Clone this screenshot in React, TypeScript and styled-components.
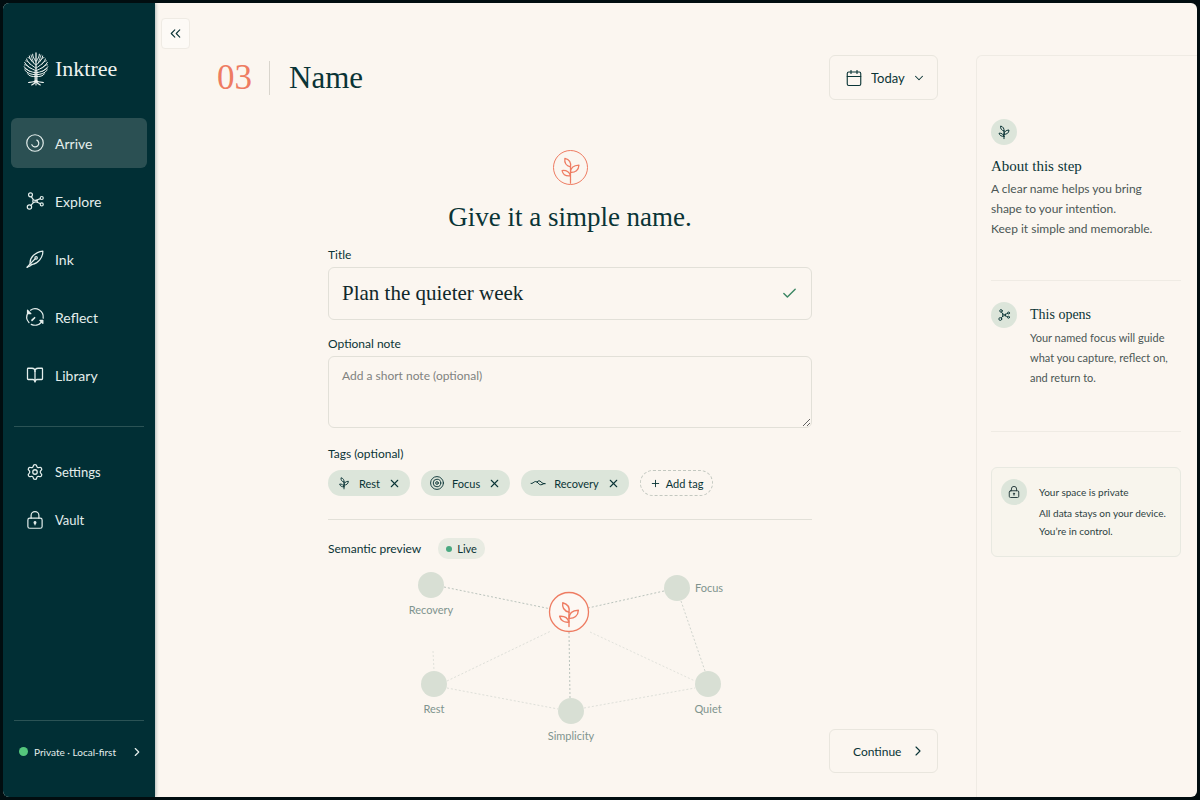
import React from "react";
import styled, { createGlobalStyle, css } from "styled-components";
import { BookOpen, Calendar, Check, ChevronDown, ChevronRight, ChevronsLeft, Plus, Settings, X } from "lucide-react";

const sans = `Lato, "Liberation Sans", sans-serif`;
const serif = `"Liberation Serif", "Times New Roman", serif`;
const color = {
  frame: "#010d10",
  pine: "#012f35",
  pineActive: "#2b5053",
  paper: "#fbf6f0",
  ink: "#0a3436",
  body: "#4b5655",
  coral: "#ee7c62",
  sage: "#dce5da",
  line: "#e2e0d8",
  faint: "#efebe4",
};

const GlobalStyle = createGlobalStyle`
  *, *::before, *::after { box-sizing: border-box; }
  body { margin: 0; background: ${color.frame}; font-family: ${sans}; color: ${color.ink}; }
  button, input, textarea, select { font: inherit; color: inherit; }
  button { cursor: pointer; }
  h1, h2, h3, p, ul { margin: 0; padding: 0; }
  svg { display: block; flex: none; }
`;

/* ---------- icons ---------- */

type IconProps = { size?: number; weight?: number };

const Line = ({ size = 18, weight = 1.6, children }: IconProps & { children: React.ReactNode }) => (
  <svg width={size} height={size} viewBox="0 0 24 24" overflow="visible" fill="none" stroke="currentColor" strokeWidth={weight} strokeLinecap="round" strokeLinejoin="round" aria-hidden="true">
    {children}
  </svg>
);

const sprigPaths = (
  <>
    <path d="M12 22V10.500" />
    <path d="M12 10.500C8.200 9.600 6.400 7 7 3c3.800 1 5.600 4 5 7.500z" />
    <path d="M12 15.500c0-4 3-6.300 7.500-6.500-.2 4.500-3.200 6.800-7.500 6.500z" />
    <path d="M12 18.500c-1-3.500-3.700-5-7.500-4.700.8 3.400 3.800 5.200 7.500 4.700z" />
  </>
);

const SprigIcon = ({ rooted, ...p }: IconProps & { rooted?: boolean }) => (
  <Line {...p}>
    {sprigPaths}
    {rooted && <path d="M12 22v3" />}
  </Line>
);

const ArriveIcon = (p: IconProps) => (
  <Line {...p}>
    <circle cx="12" cy="12" r="11" />
    <path d="M14.500 8.200A4.800 4.800 0 1 1 7.800 14.300" />
  </Line>
);

const NetworkIcon = (p: IconProps) => (
  <Line {...p}>
    <circle cx="6" cy="3.800" r="2.600" />
    <circle cx="4.600" cy="20" r="2.900" />
    <circle cx="21" cy="8" r="2" />
    <circle cx="21" cy="16.500" r="2" />
    <path d="M7 6.200l2.500 3.600M6.500 17.800l3-3.300M9.500 9.800c-.6 1.600-.6 3.100 0 4.700M9.500 9.800c2 1.800 4 1.600 5.500.7l4.300-1.700M9.500 14.500c2-1.500 4-1.700 5.500-.8l4.300 2M15 10.500v3.200" />
  </Line>
);

const QuillIcon = (p: IconProps) => (
  <Line {...p}>
    <path d="M5.500 18.500C4.500 10 12 3 22.500 1.500 22.500 10.500 16 18 8.500 19.300z" />
    <path d="M1.500 23l4-4.500 4.500-4.500 2.300-2.300" />
    <circle cx="13.500" cy="10.500" r="1.600" />
    <path d="M1.500 23l4.500-2.200 2.500-1.500" />
  </Line>
);

const ReflectIcon = (p: IconProps) => (
  <Line {...p}>
    <path d="M6 2.900A11 11 0 0 1 22.900 13.500" />
    <path d="M20.500 19A11 11 0 0 1 7 21.800" />
    <path d="M4 19.500A11 11 0 0 1 2.800 6.200" />
    <path d="M2 3v4.500h4.500zM22.500 20.500v-4h-4z" fill="currentColor" />
    <path d="M8 16.500l3.500-3.500M8 16.500l.5-1" strokeWidth="2.200" />
  </Line>
);

const LockIcon = (p: IconProps) => (
  <Line {...p}>
    <rect x="2.500" y="9.500" width="19" height="13.500" rx="2.500" />
    <path d="M6.800 9.500V6a5.200 5.200 0 0 1 10.400 0v3.500" />
    <circle cx="12" cy="15.200" r="1.200" fill="currentColor" />
    <path d="M12 16v2.400" />
  </Line>
);

const TargetIcon = (p: IconProps) => (
  <Line {...p}>
    <circle cx="12" cy="12" r="11" />
    <circle cx="12" cy="12" r="6.500" />
    <circle cx="12" cy="12" r="2.300" />
  </Line>
);

const WaveIcon = () => (
  <svg width="16" height="8" viewBox="0 0 16 8" fill="none" stroke="currentColor" strokeLinecap="round" aria-hidden="true">
    <path d="M1 4.500c1.500.8 2.600-2 4.700-2s2.800 3.300 5 3.300S13.500 4 15 4.600" />
    <path d="M7 3C8.400 1.200 9.800 1.600 11 2.900S13.500 4.800 15 4.600" />
  </svg>
);

const TreeLogo = () => (
  <svg width="26" height="34" viewBox="0 0 26 34" fill="none" stroke="currentColor" strokeLinecap="round" aria-hidden="true">
    <path d="M13 1v28" strokeWidth="1.300" />
    <path d="M12 19.500v9.500M14 19.500v9.500" strokeWidth=".9" />
    <g strokeWidth="1">
      <path d="M12.500 24.500C9.500 24.800 6 24.200 4.500 21.800M12.500 22.800C9 22.500 4 21.500 2.200 18.500M12.500 20.800C8.500 20 3 18.500 1.200 14.800M12.500 18.500C9 17 3.500 14.500 1.600 10.500M12.500 16C9.500 13.500 4.500 11 3.600 7M12.500 12.800C10.500 10.500 6.500 8 6.300 4M12.500 9C11.500 7 9.500 5 9.600 2.200" />
      <path d="M13.500 24.500c3 .3 6.500-.3 8-2.700M13.500 22.800c3.500-.3 8.500-1.300 10.300-4.300M13.500 20.800c4-.8 9.500-2.300 11.300-6M13.500 18.500c3.500-1.500 9-4 10.900-8M13.500 16c3-2.500 8-5 8.900-9M13.500 12.800c2-2.300 6-4.800 6.200-8.800M13.500 9c1-2 3-4 2.900-6.800" />
    </g>
    <g strokeWidth=".8">
      <path d="M6.500 19.500C4.500 17.500 3 16.500 1.500 17M7 16.300C5 14 3 12.600 1.400 12.800M7.300 12.500C6 10 4 9 2.600 8.800M8.700 9C8 6.500 6.500 5.700 5 5.600M10.700 11C10 8 8.500 5.500 8 3" />
      <path d="M19.500 19.500c2-2 3.500-3 5-2.500M19 16.300c2-2.300 4-3.700 5.600-3.500M18.700 12.500C20 10 22 9 23.400 8.800M17.300 9c.7-2.500 2.200-3.300 3.700-3.400M15.300 11c.7-3 2.200-5.500 2.700-8" />
    </g>
    <path strokeWidth="1.100" d="M12.500 28.500c-1 1.700-4 1.700-7 2M13.500 28.500c1 1.700 4 1.700 7 2M12.700 29c-.5 2-2 3-4 4M13.300 29c.5 2 2 3 4 4M13 29v4" />
  </svg>
);

/* ---------- shell ---------- */

const Frame = styled.div`
  min-height: 100vh;
  padding: 3px;
  display: flex;
`;

const Window = styled.div`
  flex: 1;
  display: grid;
  grid-template-columns: 152px minmax(0, 1fr) 221px;
  border-radius: 6px;
  overflow: hidden;
  background: ${color.paper};
`;

const Sidebar = styled.nav`
  display: flex;
  flex-direction: column;
  padding: 0 8px;
  background: ${color.pine};
  color: #e4eeec;
  box-shadow: 1px 0 3px rgba(1, 47, 53, 0.3);
`;

const Brand = styled.a`
  display: flex;
  align-items: center;
  gap: 6px;
  height: 34px;
  margin: 49px 0 32px 12px;
  color: #eef3f0;
  font-family: ${serif};
  font-size: 22px;
  text-decoration: none;
`;

const NavList = styled.ul`
  display: flex;
  flex-direction: column;
  gap: 8px;
  list-style: none;
`;

const NavLink = styled.a<{ $active?: boolean; $compact?: boolean }>`
  display: flex;
  align-items: center;
  gap: 11px;
  height: ${(p) => (p.$compact ? 40 : 50)}px;
  padding-left: 15px;
  border-radius: 6px;
  color: inherit;
  font-size: ${(p) => (p.$compact ? 13 : 14)}px;
  text-decoration: none;
  ${(p) => p.$active && css`background: ${color.pineActive};`}
`;

const SideRule = styled.hr`
  width: calc(100% - 6px);
  height: 1px;
  margin: 0 auto;
  border: 0;
  background: #2b5355;
`;

const SideTop = styled.div`
  flex: 1;
  ${SideRule} { margin: 26px auto 25px; }
`;

const PrivacyButton = styled.button`
  display: flex;
  align-items: center;
  gap: 6px;
  height: 61px;
  margin-bottom: 15px;
  padding: 0 3px 0 8px;
  border: 0;
  background: none;
  font-size: 10px;
  white-space: nowrap;
  svg { margin-left: auto; }
`;

const Dot = styled.span<{ $size: number; $color: string }>`
  flex: none;
  width: ${(p) => p.$size}px;
  height: ${(p) => p.$size}px;
  border-radius: 50%;
  background: ${(p) => p.$color};
`;

/* ---------- main column ---------- */

const Main = styled.main`
  display: flex;
  flex-direction: column;
  padding: 15px 38px 24px 6px;
`;

const CollapseButton = styled.button`
  display: grid;
  place-items: center;
  width: 29px;
  height: 31px;
  padding: 0;
  border: 1px solid ${color.faint};
  border-radius: 4px;
  background: #fdfaf6;
`;

const Header = styled.header`
  display: flex;
  align-items: center;
  height: 45px;
  margin: 6px 0 0 56px;
  font-family: ${serif};
`;

const StepNumber = styled.span`
  color: ${color.coral};
  font-size: 35px;
  line-height: 40px;
`;

const PageTitle = styled.h1`
  margin: 0 auto 0 17px;
  padding-left: 19px;
  border-left: 1px solid #d9d5cd;
  font-size: 31px;
  font-weight: 400;
  line-height: 34px;
`;

const DayPicker = styled.div`
  display: grid;
  align-items: center;
  width: 109px;
  height: 45px;
  font-family: ${sans};
  > * { grid-area: 1 / 1; }
  svg { pointer-events: none; }
  svg:first-of-type { margin-left: 16px; }
  svg:last-of-type { justify-self: end; margin-right: 12px; }
`;

const outlined = css`
  height: 100%;
  border: 1px solid #e9e6de;
  border-radius: 6px;
  background: transparent;
`;

const DaySelect = styled.select`
  ${outlined}
  width: 100%;
  padding: 0 30px 0 41px;
  appearance: none;
  font-size: 13px;
`;

const Workspace = styled.div`
  flex: 1;
  display: grid;
  grid-template-columns: minmax(0, 1fr) 109px;
  column-gap: 17px;
  padding-left: 167px;
`;

const ContinueButton = styled.button`
  ${outlined}
  align-self: end;
  display: flex;
  align-items: center;
  justify-content: space-between;
  height: 44px;
  padding: 0 11px 0 23px;
  font-size: 12px;
`;

const Form = styled.form`
  display: flex;
  flex-direction: column;
  padding-top: 50px;
`;

const Emblem = styled.div`
  display: grid;
  justify-content: center;
  align-self: center;
  width: 35px;
  height: 35px;
  padding-top: 4px;
  border: 1px solid ${color.coral};
  border-radius: 50%;
  color: ${color.coral};
`;

const Prompt = styled.h2`
  margin: 14px 0 12px;
  font-family: ${serif};
  font-size: 27px;
  font-weight: 400;
  line-height: 36px;
  text-align: center;
`;

const Label = styled.label`
  margin-bottom: 4px;
  font-size: 12px;
  line-height: 16px;
`;

const TitleField = styled.div`
  display: flex;
  align-items: center;
  height: 53px;
  margin-bottom: 16px;
  padding: 0 13px;
  border: 1px solid ${color.line};
  border-radius: 6px;
  color: #3b8663;
`;

const TitleInput = styled.input`
  flex: 1;
  min-width: 0;
  padding: 0;
  border: 0;
  outline: 0;
  background: none;
  color: #10282a;
  font-family: ${serif};
  font-size: 21px;
`;

const Note = styled.textarea`
  height: 72px;
  margin-bottom: 18px;
  padding: 10px 13px;
  border: 1px solid ${color.line};
  border-radius: 6px;
  background: none;
  font-size: 12px;
  line-height: 18px;
  resize: vertical;
  &::placeholder { color: #80827f; opacity: 1; }
`;

const GroupTitle = styled.h3`
  font-size: 12px;
  font-weight: 400;
  line-height: 16px;
`;

const TagRow = styled.div`
  display: flex;
  flex-wrap: wrap;
  gap: 11px;
  margin: 8px 0 23px;
`;

const Tag = styled.span`
  display: flex;
  align-items: center;
  gap: 8px;
  height: 26px;
  padding: 0 9px;
  border-radius: 13px;
  background: ${color.sage};
  font-size: 11px;
`;

const RemoveButton = styled.button`
  padding: 0;
  border: 0;
  background: none;
`;

const AddTagButton = styled.button`
  display: flex;
  align-items: center;
  gap: 5px;
  height: 26px;
  padding: 0 9px;
  border: 1px dashed #c3c8c0;
  border-radius: 13px;
  background: none;
  font-size: 11px;
`;

const Rule = styled.hr`
  width: 100%;
  height: 1px;
  margin: 0;
  border: 0;
  background: ${(p) => p.color ?? color.line};
`;

const PreviewHead = styled.div`
  display: flex;
  align-items: center;
  gap: 17px;
  margin: 18px 0 12px;
`;

const LiveBadge = styled.span`
  display: flex;
  align-items: center;
  gap: 5px;
  height: 21px;
  padding: 0 8px;
  border-radius: 10px;
  background: #e8ebe2;
  font-size: 11px;
`;

const Graph = styled.svg`
  align-self: center;
  max-width: 100%;
  text { font: 11px ${sans}; fill: #7f948e; text-anchor: middle; }
`;

/* ---------- help column ---------- */

const Aside = styled.aside`
  margin-top: 52px;
  padding: 63px 16px 0 14px;
  border: solid ${color.faint};
  border-width: 1px 0 0 1px;
  border-radius: 6px 0 0 0;
`;

const Badge = styled.span`
  flex: none;
  display: grid;
  place-items: center;
  width: 26px;
  height: 26px;
  border-radius: 50%;
  background: ${color.sage};
`;

const HelpTitle = styled.h3<{ $size: number }>`
  font-family: ${serif};
  font-size: ${(p) => p.$size}px;
  font-weight: 400;
  line-height: 26px;
`;

const HelpText = styled.p<{ $size: number }>`
  color: ${color.body};
  font-size: ${(p) => p.$size}px;
  line-height: 20px;
  white-space: nowrap;
`;

const HelpSection = styled.section<{ $row?: boolean }>`
  display: ${(p) => (p.$row ? "flex" : "block")};
  gap: 13px;
  margin: ${(p) => (p.$row ? "21px 0 43px" : "0 0 41px")};
  ${(p) => !p.$row && css`${HelpTitle} { margin-top: 8px; }`}
`;

const PrivateCard = styled.section`
  display: flex;
  gap: 12px;
  height: 90px;
  margin-top: 35px;
  padding: 11px 9px;
  border: 1px solid #e8e9e1;
  border-radius: 6px;
  background: #f8f5ed;
  color: #2c4142;
  font-size: 10px;
  line-height: 18px;
  white-space: nowrap;
  h3 { margin: 4px 0 3px; font-size: 10px; font-weight: 400; }
`;

const mainNav = [
  { label: "Arrive", icon: <ArriveIcon /> },
  { label: "Explore", icon: <NetworkIcon /> },
  { label: "Ink", icon: <QuillIcon /> },
  { label: "Reflect", icon: <ReflectIcon /> },
  { label: "Library", icon: <BookOpen size={18} strokeWidth={1.7} /> },
];

const tags = [
  { label: "Rest", icon: <SprigIcon size={14} /> },
  { label: "Focus", icon: <TargetIcon size={14} /> },
  { label: "Recovery", icon: <WaveIcon /> },
];

const nodes = [
  { label: "Recovery", x: 103, y: 14, tx: 103, ty: 43 },
  { label: "Focus", x: 349, y: 17, tx: 381, ty: 21 },
  { label: "Rest", x: 106, y: 113, tx: 106, ty: 142 },
  { label: "Quiet", x: 380, y: 113, tx: 380, ty: 142 },
  { label: "Simplicity", x: 243, y: 140, tx: 243, ty: 169 },
];

const edges: [number, number, number, number, number][] = [
  [116, 16, 223, 38, 0.9],
  [336, 20, 260, 37, 0.9],
  [241, 61, 242, 127, 0.9],
  [353, 30, 377, 100, 0.6],
  [119, 110, 223, 60, 0.4],
  [119, 117, 230, 138, 0.4],
  [256, 137, 367, 117, 0.4],
  [262, 61, 367, 110, 0.35],
  [105, 80, 106, 100, 0.35],
];

export default function App() {
  const [title, setTitle] = React.useState("Plan the quieter week");
  return (
    <Frame>
      <GlobalStyle />
      <Window>
        <Sidebar aria-label="Primary">
          <SideTop>
            <Brand href="#"><TreeLogo />Inktree</Brand>
            <NavList>
              {mainNav.map((item, i) => (
                <li key={item.label}>
                  <NavLink href="#" $active={i === 0}>{item.icon}{item.label}</NavLink>
                </li>
              ))}
            </NavList>
            <SideRule />
            <NavList>
              <li><NavLink href="#" $compact><Settings size={18} strokeWidth={1.7} />Settings</NavLink></li>
              <li><NavLink href="#" $compact><LockIcon />Vault</NavLink></li>
            </NavList>
          </SideTop>
          <SideRule />
          <PrivacyButton type="button">
            <Dot $size={9} $color="#54c67c" />Private · Local-first
            <ChevronRight size={14} />
          </PrivacyButton>
        </Sidebar>

        <Main>
          <CollapseButton type="button" aria-label="Collapse sidebar"><ChevronsLeft size={17} strokeWidth={1.6} /></CollapseButton>
          <Header>
            <StepNumber>03</StepNumber>
            <PageTitle>Name</PageTitle>
            <DayPicker>
              <DaySelect aria-label="Day" defaultValue="Today">
                <option>Today</option>
                <option>Tomorrow</option>
              </DaySelect>
              <Calendar size={18} strokeWidth={1.5} />
              <ChevronDown size={14} strokeWidth={1.8} />
            </DayPicker>
          </Header>

          <Workspace>
            <Form id="name-form" onSubmit={(e) => e.preventDefault()}>
              <Emblem><SprigIcon size={27} weight={1.1} rooted /></Emblem>
              <Prompt>Give it a simple name.</Prompt>

              <Label htmlFor="title">Title</Label>
              <TitleField>
                <TitleInput id="title" value={title} onChange={(e) => setTitle(e.target.value)} />
                <Check size={17} strokeWidth={2} />
              </TitleField>

              <Label htmlFor="note">Optional note</Label>
              <Note id="note" placeholder="Add a short note (optional)" />

              <GroupTitle>Tags (optional)</GroupTitle>
              <TagRow>
                {tags.map((tag) => (
                  <Tag key={tag.label}>
                    {tag.icon}{tag.label}
                    <RemoveButton type="button" aria-label={`Remove ${tag.label}`}><X size={13} /></RemoveButton>
                  </Tag>
                ))}
                <AddTagButton type="button"><Plus size={11} />Add tag</AddTagButton>
              </TagRow>
              <Rule />

              <PreviewHead>
                <GroupTitle>Semantic preview</GroupTitle>
                <LiveBadge><Dot $size={6} $color="#4aa981" />Live</LiveBadge>
              </PreviewHead>
              <Graph width="484" height="174" viewBox="0 0 484 174" role="img" aria-label="Semantic preview graph">
                {edges.map(([x1, y1, x2, y2, o]) => (
                  <line key={`${x1}-${y1}-${x2}`} x1={x1} y1={y1} x2={x2} y2={y2} stroke="#b4bfb8" strokeDasharray="2 2" opacity={o} />
                ))}
                {nodes.map((n) => (
                  <g key={n.label}>
                    <circle cx={n.x} cy={n.y} r="13" fill="#d8dfd4" />
                    <text x={n.tx} y={n.ty}>{n.label}</text>
                  </g>
                ))}
                <circle cx="241" cy="41" r="19.500" fill="#fdf8f3" stroke={color.coral} strokeWidth="1.300" />
                <g transform="translate(226 28) scale(1.250)" fill="none" stroke={color.coral} strokeWidth="1.100" strokeLinecap="round" strokeLinejoin="round">
                  {sprigPaths}
                </g>
              </Graph>
            </Form>
            <ContinueButton type="submit" form="name-form">Continue<ChevronRight size={16} strokeWidth={1.7} /></ContinueButton>
          </Workspace>
        </Main>

        <Aside>
          <HelpSection>
            <Badge><SprigIcon size={16} weight={1.5} /></Badge>
            <HelpTitle $size={15}>About this step</HelpTitle>
            <HelpText $size={12}>A clear name helps you bring<br />shape to your intention.<br />Keep it simple and memorable.</HelpText>
          </HelpSection>
          <Rule color={color.faint} />
          <HelpSection $row>
            <Badge><NetworkIcon size={12} weight={1.800} /></Badge>
            <div>
              <HelpTitle $size={14}>This opens</HelpTitle>
              <HelpText $size={11}>Your named focus will guide<br />what you capture, reflect on,<br />and return to.</HelpText>
            </div>
          </HelpSection>
          <Rule color={color.faint} />
          <PrivateCard>
            <Badge><LockIcon size={12} weight={2} /></Badge>
            <div>
              <h3>Your space is private</h3>
              <p>All data stays on your device.<br />You’re in control.</p>
            </div>
          </PrivateCard>
        </Aside>
      </Window>
    </Frame>
  );
}
